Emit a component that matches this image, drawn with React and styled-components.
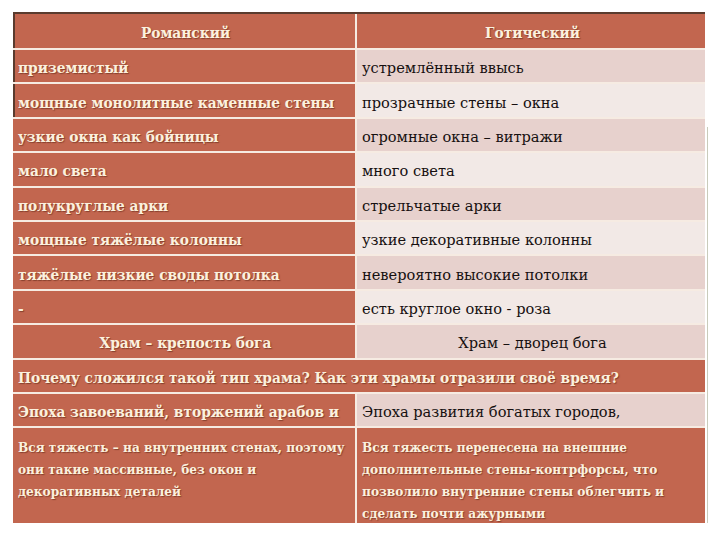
import React from "react";
import styled, { createGlobalStyle } from "styled-components";

const Global = createGlobalStyle`
  html, body { margin: 0; padding: 0; background: #ffffff; }
  body { width: 720px; height: 540px; overflow: hidden; }
`;

const Page = styled.div`
  padding: 12px 0 0 13px;
  width: 720px;
  height: 540px;
  box-sizing: border-box;
`;

const Table = styled.div`
  position: relative;
  width: 692px;
  display: grid;
  grid-template-columns: 342px 348px;
  grid-template-rows: 34px repeat(11, 32.4px) 95px;
  column-gap: 2px;
  row-gap: 2px;
  background: #f6ebe2;
  border-top: 2px solid #5a3b2e;
  &::after {
    content: "";
    position: absolute;
    right: -3px;
    top: 113px;
    bottom: 0;
    width: 1px;
    background: #c9cbbb;
  }
`;

const tones = {
  terra: { bg: "#c2664f", fg: "#fbf1de" },
  rose: { bg: "#e7d1cd", fg: "#161010" },
  pale: { bg: "#f2e9e6", fg: "#161010" },
};

const sizeOf = (p) => {
  if (p.$small) return "13.5px";
  if (p.$tone === "terra") return "15.3px";
  return "14.6px";
};

const Cell = styled.div`
  grid-column: ${(p) => (p.$span ? "1 / span 2" : "auto")};
  background: ${(p) => tones[p.$tone].bg};
  color: ${(p) => tones[p.$tone].fg};
  display: flex;
  align-items: ${(p) => (p.$top ? "flex-start" : "center")};
  justify-content: ${(p) => (p.$center ? "center" : "flex-start")};
  padding: ${(p) => (p.$top ? "8px 2px 0 5px" : "4px 2px 0 5px")};
  box-sizing: border-box;
  box-shadow: ${(p) => (p.$edge ? "inset 2px 0 0 #5a3b2e" : "none")};
  font-family: ${(p) =>
    p.$tone === "terra"
      ? `"DejaVu Serif Condensed", "DejaVu Serif", serif`
      : `"DejaVu Serif", serif`};
  font-stretch: ${(p) => (p.$tone === "terra" ? "condensed" : "normal")};
  font-size: ${sizeOf};
  line-height: ${(p) => (p.$small ? "22px" : "20px")};
  font-weight: ${(p) => (p.$tone === "terra" ? 700 : 400)};
  text-shadow: ${(p) =>
    p.$tone === "terra" ? "1px 1px 1px rgba(90, 35, 20, 0.55)" : "none"};
  white-space: nowrap;
  overflow: hidden;
`;

const Lines = styled.div`
  white-space: pre-line;
`;

const rows = [
  ["приземистый", "устремлённый ввысь"],
  ["мощные монолитные каменные стены", "прозрачные стены – окна"],
  ["узкие окна  как бойницы", "огромные окна – витражи"],
  ["мало света", "много света"],
  ["полукруглые арки", "стрельчатые арки"],
  ["мощные тяжёлые колонны", "узкие декоративные колонны"],
  ["тяжёлые низкие своды  потолка", "невероятно высокие потолки"],
  ["-", "есть круглое окно - роза"],
];

export default function App() {
  return (
    <Page>
      <Global />
      <Table>
        <Cell $tone="terra" $center $edge>Романский</Cell>
        <Cell $tone="terra" $center>Готический</Cell>
        {rows.map(([l, r], i) => (
          <React.Fragment key={i}>
            <Cell $tone="terra" $edge={i < 2}>{l}</Cell>
            <Cell $tone={i % 2 === 0 ? "rose" : "pale"}>{r}</Cell>
          </React.Fragment>
        ))}
        <Cell $tone="terra" $center>Храм – крепость бога</Cell>
        <Cell $tone="rose" $center>Храм – дворец бога</Cell>
        <Cell $tone="terra" $span>
          Почему сложился такой тип храма? Как эти храмы отразили своё время?
        </Cell>
        <Cell $tone="terra">Эпоха завоеваний, вторжений арабов и</Cell>
        <Cell $tone="rose">Эпоха развития богатых городов,</Cell>
        <Cell $tone="terra" $top $small>
          <Lines>{"Вся тяжесть – на внутренних стенах, поэтому\nони такие массивные, без окон и\nдекоративных деталей"}</Lines>
        </Cell>
        <Cell $tone="terra" $top $small>
          <Lines>{"Вся тяжесть перенесена на внешние\nдополнительные стены-контрфорсы, что\nпозволило внутренние стены облегчить и\nсделать почти ажурными"}</Lines>
        </Cell>
      </Table>
    </Page>
  );
}
